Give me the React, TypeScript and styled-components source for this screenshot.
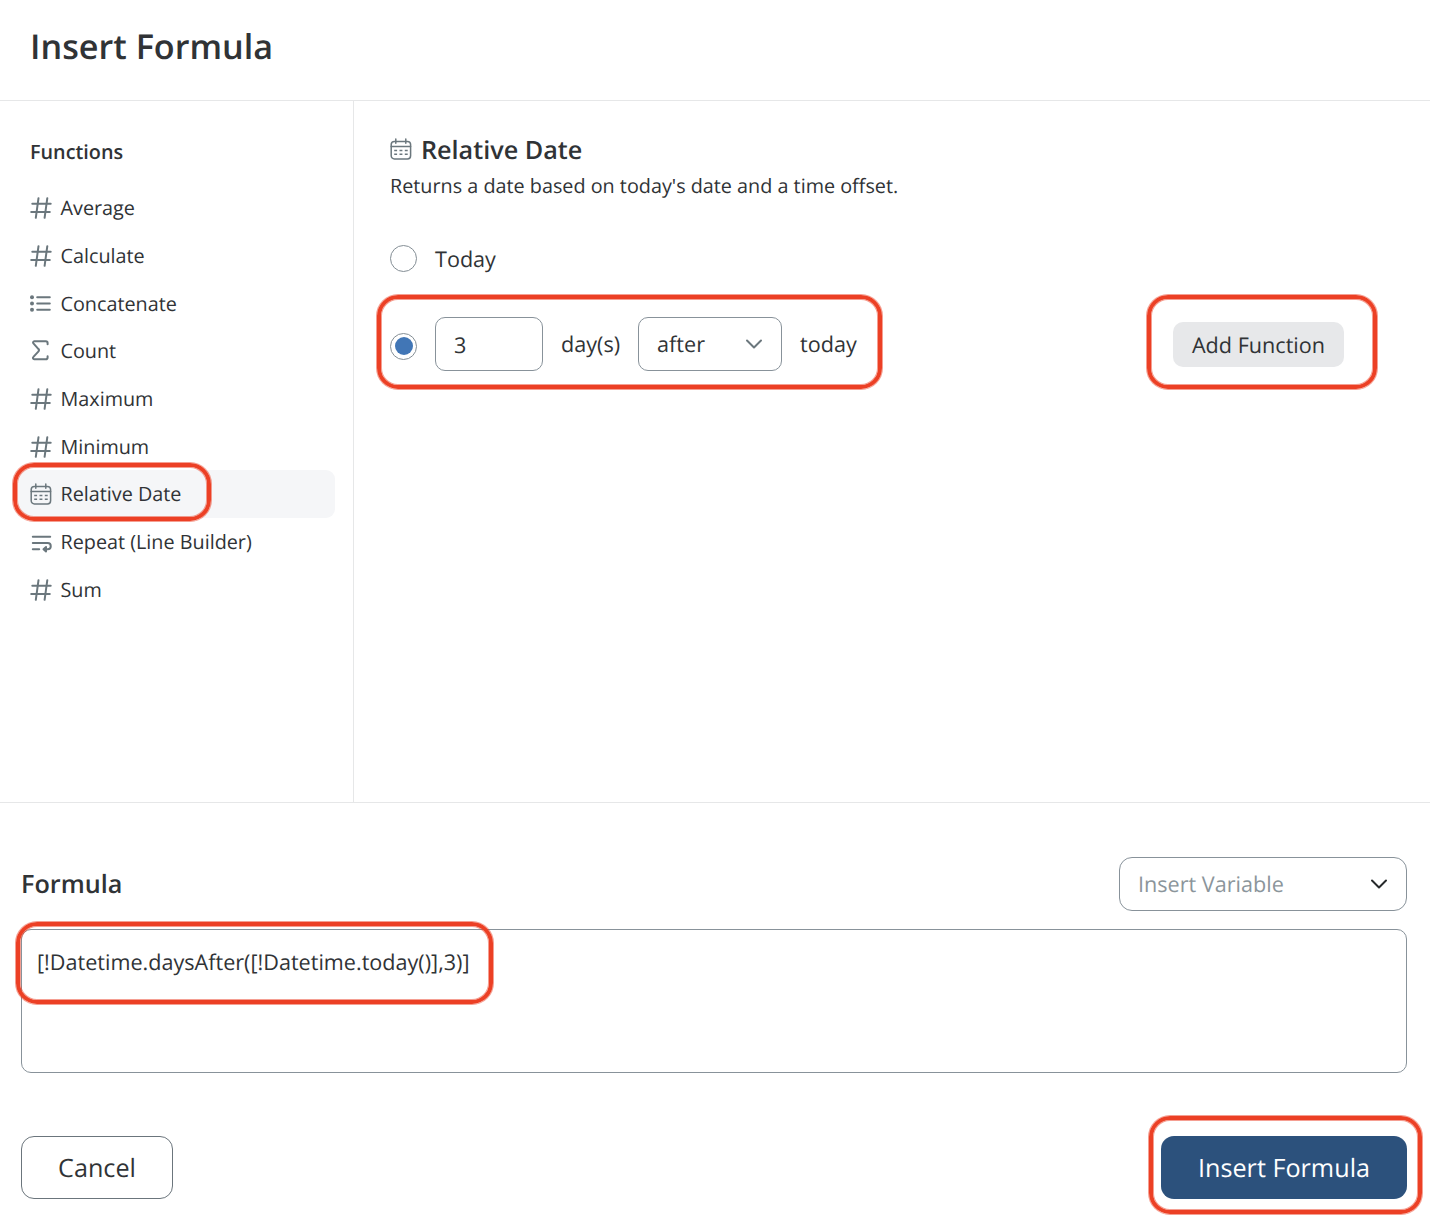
import { useState } from "react";
import type { ReactNode } from "react";
import styled, { createGlobalStyle } from "styled-components";

const GlobalStyle = createGlobalStyle`
  * {
    box-sizing: border-box;
  }

  body {
    margin: 0;
    background: #ffffff;
    color: #303336;
    font-family: "Open Sans", sans-serif;
    text-rendering: geometricPrecision;
  }

  button {
    font-family: inherit;
    color: inherit;
    text-rendering: inherit;
    cursor: pointer;
  }
`;

const Dialog = styled.div`
  display: flex;
  flex-direction: column;
  width: 1430px;
  height: 1230px;
  overflow: hidden;
`;

const Header = styled.header`
  display: flex;
  align-items: center;
  height: 101px;
  padding: 0 30px 6px;
  border-bottom: 1px solid #e6e7e8;
`;

const Title = styled.h1`
  margin: 0;
  font-size: 34.2px;
  font-weight: 600;
  line-height: 48px;
`;

const Body = styled.div`
  display: flex;
  height: 702px;
  border-bottom: 1px solid #e6e7e8;
`;

const Sidebar = styled.nav`
  display: flex;
  flex-direction: column;
  width: 354px;
  padding: 36px 18px 0;
  border-right: 1px solid #e6e7e8;
`;

const SidebarTitle = styled.h2`
  margin: 0 0 17px;
  padding-left: 12px;
  font-size: 19.8px;
  font-weight: 600;
  line-height: 30px;
`;

const FunctionItem = styled.button<{ $selected: boolean }>`
  display: flex;
  align-items: center;
  gap: 8.5px;
  width: 100%;
  height: 47.7px;
  padding: 0 12px;
  border: 0;
  border-radius: 9px;
  background: ${({ $selected }) => ($selected ? "#f5f6f8" : "transparent")};
  font-size: 19.8px;
  text-align: left;

  svg {
    margin-top: 0.5px;
  }
`;

const Icon = styled.svg`
  flex: none;
  width: 22px;
  height: 24px;
  fill: none;
  stroke: #6b777d;
  stroke-width: 2;
  stroke-linecap: round;
  stroke-linejoin: round;
`;

const Content = styled.main`
  flex: 1;
  padding: 30px 52px 0 36px;
`;

const ContentTitle = styled.h2`
  display: flex;
  align-items: center;
  gap: 9px;
  height: 36px;
  margin: 0;
  font-size: 25.2px;
  font-weight: 600;
`;

const Description = styled.p`
  margin: 4px 0 0;
  font-size: 19.8px;
  line-height: 30px;
`;

const OptionRow = styled.div`
  display: flex;
  align-items: center;
  gap: 18px;
  height: 54px;
  margin-top: 30px;
  font-size: 21.6px;
`;

const OffsetRow = styled.div`
  display: flex;
  align-items: center;
  justify-content: space-between;
  margin-top: 32px;
  padding-right: 34px;
`;

const OffsetFields = styled.div`
  display: flex;
  align-items: center;
  gap: 18px;
  font-size: 21.6px;
`;

const Label = styled.span`
  padding-top: 2px;
`;

const Radio = styled.button<{ $low?: boolean }>`
  display: flex;
  align-items: flex-start;
  width: 27px;
  height: 27px;
  margin-top: ${({ $low }) => ($low ? "5px" : "0")};
  padding: 3px 3px 4px 4px;
  border: 1px solid #848e95;
  border-radius: 50%;
  background: #ffffff;
`;

const RadioDot = styled.span`
  flex: none;
  width: 18px;
  height: 18px;
  border-radius: 50%;
  background: #4176b6;
`;

const Field = styled.div<{ $width: number; $muted?: boolean }>`
  display: flex;
  align-items: center;
  justify-content: space-between;
  width: ${({ $width }) => $width}px;
  height: 54px;
  padding: 0 18px;
  border: 1px solid #88929a;
  border-radius: ${({ $muted }) => ($muted ? 13 : 10)}px;
  color: ${({ $muted }) => ($muted ? "#8b959b" : "inherit")};
  font-size: 21.6px;
`;

const Chevron = styled.svg<{ $color: string }>`
  width: 18px;
  height: 12px;
  fill: none;
  stroke: ${({ $color }) => $color};
  stroke-width: 2;
  stroke-linecap: round;
  stroke-linejoin: round;
`;

const AddButton = styled.button`
  display: block;
  width: 171px;
  height: 45px;
  padding: 2px 0 0;
  border: 0;
  border-radius: 10px;
  background: #e7e8ea;
  font-size: 21.6px;
`;

const Footer = styled.footer`
  display: flex;
  flex-direction: column;
  padding: 54px 23px 0 21px;
`;

const FooterRow = styled.div`
  display: flex;
  align-items: center;
  justify-content: space-between;
`;

const FormulaTitle = styled.h2`
  margin: 0;
  font-size: 25.2px;
  font-weight: 600;
`;

const Highlighted = styled.div`
  position: relative;
`;

const FormulaArea = styled(Highlighted)`
  margin: 18px 0 63px;
`;

const FormulaBox = styled.div`
  height: 144px;
  padding: 18px 15px;
  border: 1px solid #88929a;
  border-radius: 10px;
  font-size: 21.6px;
  line-height: 30px;
`;

const ActionButton = styled.button<{ $primary?: boolean }>`
  display: block;
  width: ${({ $primary }) => ($primary ? 246 : 152)}px;
  height: 63px;
  padding: 0;
  border: ${({ $primary }) => ($primary ? "0" : "1px solid #6b757c")};
  border-radius: 13px;
  background: ${({ $primary }) => ($primary ? "#2c517c" : "#ffffff")};
  && {
    color: ${({ $primary }) => ($primary ? "#ffffff" : "#303336")};
  }
  font-size: 25.2px;
`;

// Red annotation ring laid over a control; inset is its reach past each edge.
const Ring = styled.span<{ $inset: string }>`
  position: absolute;
  inset: ${({ $inset }) => $inset};
  margin: 1px;
  border: 4px solid #ec4025;
  border-radius: 21px;
  box-shadow:
    0 0 0 1px rgba(236, 64, 37, 0.5),
    inset 0 0 0 1px rgba(236, 64, 37, 0.5);
  pointer-events: none;
`;

const HashIcon = () => (
  <Icon viewBox="0 0 22 24">
    <path d="M8.5 2.2 5.8 21.8M17.3 2.2l-2.7 19.6M2.3 7.7h18.4M1.2 16h18.6" />
  </Icon>
);

const ListIcon = () => (
  <Icon viewBox="0 0 22 24">
    <path d="M7.2 6.2h12.6M7.2 12.5h12.6M7.2 18.8h12.6" />
    <g fill="#6b777d" stroke="none">
      <circle cx="2" cy="6.2" r="2" />
      <circle cx="2" cy="12.5" r="2" />
      <circle cx="2" cy="18.8" r="2" />
    </g>
  </Icon>
);

const SigmaIcon = () => (
  <Icon viewBox="0 0 22 24">
    <path d="M17.6 5.2V4a1.8 1.8 0 0 0-1.8-1.8H4.3a1.3 1.3 0 0 0-.9 2.2l4.9 5.4a2 2 0 0 1 0 2.8l-4.9 5.3a1.3 1.3 0 0 0 .9 2.3h11.5a1.8 1.8 0 0 0 1.8-1.8v-1.2" />
  </Icon>
);

const CalendarIcon = () => (
  <Icon viewBox="0 0 22 24">
    <g strokeWidth="1.5">
      <rect x="1.2" y="4.4" width="19.4" height="17.6" rx="3.2" />
      <path d="M1.2 9.4h19.4M5.8 1.9v4.4M15.8 1.9v4.4" />
      <path
        d="M4.2 13.4h2.9M9.5 13.4h2.9M14.8 13.4h2.9M4.2 17.2h2.9M9.5 17.2h2.9M14.8 17.2h2.9"
        strokeLinecap="butt"
      />
    </g>
  </Icon>
);

const WrapIcon = () => (
  <Icon viewBox="0 0 22 24">
    <path d="M2.8 6.8h17.4M2.8 13.1h14.9a3 3 0 0 1 0 6.1h-2.5M2.8 19.2h6.4" />
    <path d="M16 17v4.4l-2.5-2.2z" fill="#6b777d" />
  </Icon>
);

const icons: Record<string, () => ReactNode> = {
  hash: HashIcon,
  list: ListIcon,
  sigma: SigmaIcon,
  calendar: CalendarIcon,
  wrap: WrapIcon,
};

const functions = [
  { name: "Average", icon: "hash" },
  { name: "Calculate", icon: "hash" },
  { name: "Concatenate", icon: "list" },
  { name: "Count", icon: "sigma" },
  { name: "Maximum", icon: "hash" },
  { name: "Minimum", icon: "hash" },
  { name: "Relative Date", icon: "calendar" },
  { name: "Repeat (Line Builder)", icon: "wrap" },
  { name: "Sum", icon: "hash" },
];

const ChevronDown = ({ color }: { color: string }) => (
  <Chevron viewBox="0 0 18 12" $color={color}>
    <path d="M2 2.5 9 9.5l7-7" />
  </Chevron>
);

const App = () => {
  const [selected, setSelected] = useState("Relative Date");
  const [mode, setMode] = useState("offset");

  return (
    <Dialog>
      <GlobalStyle />
      <Header>
        <Title>Insert Formula</Title>
      </Header>
      <Body>
        <Sidebar>
          <SidebarTitle>Functions</SidebarTitle>
          {functions.map(({ name, icon }) => {
            const FunctionIcon = icons[icon];
            return (
              <Highlighted key={name}>
                <FunctionItem
                  $selected={name === selected}
                  onClick={() => setSelected(name)}
                >
                  <FunctionIcon />
                  {name}
                </FunctionItem>
                {name === "Relative Date" ? (
                  <Ring $inset="-8px 123px -4px -6px" />
                ) : null}
              </Highlighted>
            );
          })}
        </Sidebar>
        <Content>
          <ContentTitle>
            <CalendarIcon />
            <Label>Relative Date</Label>
          </ContentTitle>
          <Description>
            Returns a date based on today's date and a time offset.
          </Description>
          <OptionRow>
            <Radio onClick={() => setMode("today")}>
              {mode === "today" ? <RadioDot /> : null}
            </Radio>
            <Label>Today</Label>
          </OptionRow>
          <OffsetRow>
            <Highlighted>
              <OffsetFields>
                <Radio $low onClick={() => setMode("offset")}>
                  {mode === "offset" ? <RadioDot /> : null}
                </Radio>
                <Field $width={108}>
                  <Label>3</Label>
                </Field>
                <span>day(s)</span>
                <Field $width={144}>
                  <span>after</span>
                  <ChevronDown color="#6b777d" />
                </Field>
                <span>today</span>
              </OffsetFields>
              <Ring $inset="-23px -26px -19px -14px" />
            </Highlighted>
            <Highlighted>
              <AddButton>Add Function</AddButton>
              <Ring $inset="-28px -34px -23px -27px" />
            </Highlighted>
          </OffsetRow>
        </Content>
      </Body>
      <Footer>
        <FooterRow>
          <FormulaTitle>Formula</FormulaTitle>
          <Field $width={288} $muted>
            <span>Insert Variable</span>
            <ChevronDown color="#26292b" />
          </Field>
        </FooterRow>
        <FormulaArea>
          <FormulaBox>[!Datetime.daysAfter([!Datetime.today()],3)]</FormulaBox>
          <Ring $inset="-8px 913px 68px -6px" />
        </FormulaArea>
        <FooterRow>
          <ActionButton>Cancel</ActionButton>
          <Highlighted>
            <ActionButton $primary>Insert Formula</ActionButton>
            <Ring $inset="-21px -16px -16px -13px" />
          </Highlighted>
        </FooterRow>
      </Footer>
    </Dialog>
  );
};

export default App;
